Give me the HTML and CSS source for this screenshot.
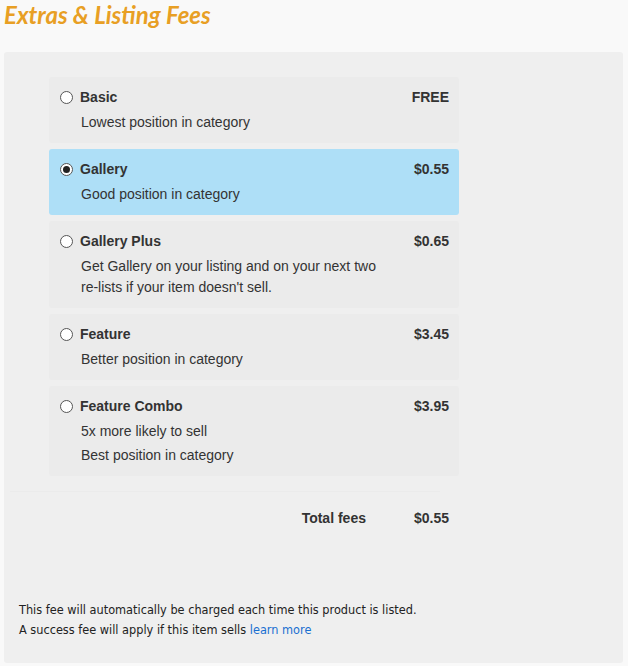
FILE: index.html
```html
<!DOCTYPE html>
<html>
<head>
<meta charset="utf-8">
<link rel="stylesheet" href="styles.css">
</head>
<body>
<h1 class="title">Extras &amp; Listing Fees</h1>
<div class="panel">
  <div class="options">
    <label class="option">
      <div class="head"><input type="radio" name="fee" class="radio"><span class="name">Basic</span><span class="price">FREE</span></div>
      <p class="desc">Lowest position in category</p>
    </label>
    <label class="option selected">
      <div class="head"><input type="radio" name="fee" class="radio" checked><span class="name">Gallery</span><span class="price">$0.55</span></div>
      <p class="desc">Good position in category</p>
    </label>
    <label class="option">
      <div class="head"><input type="radio" name="fee" class="radio"><span class="name">Gallery Plus</span><span class="price">$0.65</span></div>
      <p class="desc">Get Gallery on your listing and on your next two re-lists if your item doesn't sell.</p>
    </label>
    <label class="option">
      <div class="head"><input type="radio" name="fee" class="radio"><span class="name">Feature</span><span class="price">$3.45</span></div>
      <p class="desc">Better position in category</p>
    </label>
    <label class="option">
      <div class="head"><input type="radio" name="fee" class="radio"><span class="name">Feature Combo</span><span class="price">$3.95</span></div>
      <p class="desc">5x more likely to sell</p>
      <p class="desc desc-extra">Best position in category</p>
    </label>
  </div>
  <div class="divider"></div>
  <div class="total">
    <span class="total-label">Total fees</span>
    <span class="total-price">$0.55</span>
  </div>
  <div class="notes">
    <p class="note">This fee will automatically be charged each time this product is listed.</p>
    <p class="note">A success fee will apply if this item sells <a href="#" class="link">learn more</a></p>
  </div>
</div>
</body>
</html>
```

FILE: styles.css
```css
html, body {
  margin: 0;
  padding: 0;
  background: #f9f9f9;
}
body {
  width: 628px;
  height: 666px;
  overflow: hidden;
  font-family: "Liberation Sans", Arial, sans-serif;
  color: #333;
}
.title {
  margin: 0 0 23px 4px;
  font-family: Lato, sans-serif;
  font-weight: 700;
  font-style: italic;
  font-size: 24px;
  line-height: 29px;
  color: #e89f24;
}
.panel {
  margin-left: 4px;
  width: 619px;
  height: 611px;
  box-sizing: border-box;
  background: #efefef;
  border-radius: 3px;
  padding: 25px 15px 0;
  display: flex;
  flex-direction: column;
}
.options {
  margin-left: 30px;
  width: 410px;
  display: flex;
  flex-direction: column;
  gap: 6px;
}
.option {
  display: block;
  background: #ebebeb;
  border-radius: 3px;
  padding: 10px 10px 10px 11px;
}
.option.selected {
  background: #aedff7;
}
.head {
  display: flex;
  align-items: center;
  font-size: 14px;
  line-height: 20px;
  font-weight: 700;
  color: #333;
}
.radio {
  appearance: none;
  -webkit-appearance: none;
  box-sizing: border-box;
  margin: 1px 7px 0 0;
  width: 13px;
  height: 13px;
  border: 1px solid #555;
  border-radius: 50%;
  background: #fff;
  display: grid;
  place-items: center;
}
.radio:checked::after {
  content: "";
  width: 7px;
  height: 7px;
  border-radius: 50%;
  background: #222;
}
.name {
  flex: 1;
}
.price {
  text-align: right;
}
.desc {
  margin: 5px 0 0 21px;
  max-width: 310px;
  font-size: 14px;
  line-height: 21px;
  color: #333;
}
.desc-extra {
  margin-top: 3px;
}
.divider {
  margin: 15px 0 0 -9px;
  width: 430px;
  border-top: 1px solid #ebebeb;
}
.total {
  display: flex;
  justify-content: flex-end;
  width: 430px;
  margin-top: 16px;
  font-size: 14px;
  line-height: 20px;
  font-weight: 700;
  color: #333;
}
.total-price {
  margin-left: 48px;
}
.notes {
  margin-top: 72px;
}
.note {
  margin: 0;
  font-family: "DejaVu Sans Condensed", "DejaVu Sans", sans-serif;
  font-size: 12.6px;
  line-height: 20px;
  color: #222;
}
.link {
  color: #1a6fd1;
  text-decoration: none;
}
```
